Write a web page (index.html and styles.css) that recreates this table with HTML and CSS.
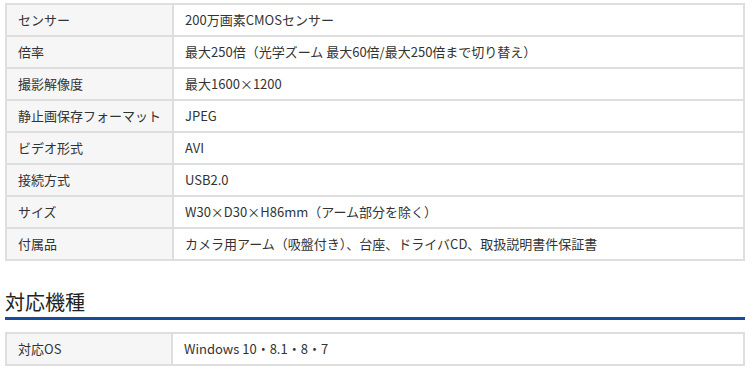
FILE: index.html
```html
<!DOCTYPE html>
<html lang="ja">
<head>
<meta charset="utf-8">
<link rel="stylesheet" href="styles.css">
</head>
<body>
<div class="page">
  <table class="spec">
    <tr><th>センサー</th><td>200万画素CMOSセンサー</td></tr>
    <tr><th>倍率</th><td>最大250倍（光学ズーム 最大60倍/最大250倍まで切り替え）</td></tr>
    <tr><th>撮影解像度</th><td>最大1600×1200</td></tr>
    <tr><th>静止画保存フォーマット</th><td>JPEG</td></tr>
    <tr><th>ビデオ形式</th><td>AVI</td></tr>
    <tr><th>接続方式</th><td>USB2.0</td></tr>
    <tr><th>サイズ</th><td>W30×D30×H86mm（アーム部分を除く）</td></tr>
    <tr><th>付属品</th><td>カメラ用アーム（吸盤付き）、台座、ドライバCD、取扱説明書件保証書</td></tr>
  </table>
  <h2 class="section-title">対応機種</h2>
  <table class="spec">
    <tr><th>対応OS</th><td>Windows 10・8.1・8・7</td></tr>
  </table>
</div>
</body>
</html>
```
FILE: styles.css
```css
html, body {
  margin: 0;
  padding: 0;
  background: #fff;
}
.page {
  padding: 3px 10px 0 5px;
  font-family: "Noto Sans CJK JP", "Noto Sans", sans-serif;
  color: #333;
}
.spec {
  width: 100%;
  border-collapse: collapse;
  border: 2px solid #dedede;
  font-size: 13px;
}
.spec th,
.spec td {
  border: 2px solid #dedede;
  height: 30px;
  padding: 0 11px;
  text-align: left;
  font-weight: normal;
  line-height: 18px;
  vertical-align: middle;
}
.spec th {
  width: 142px;
  background: #f6f6f6;
  white-space: nowrap;
}
.spec td {
  background: #fff;
}
.section-title {
  margin: 26px 0 12px;
  font-size: 20px;
  font-weight: normal;
  line-height: 30px;
  color: #222;
  border-bottom: 3px solid #1a4a9c;
}
```
